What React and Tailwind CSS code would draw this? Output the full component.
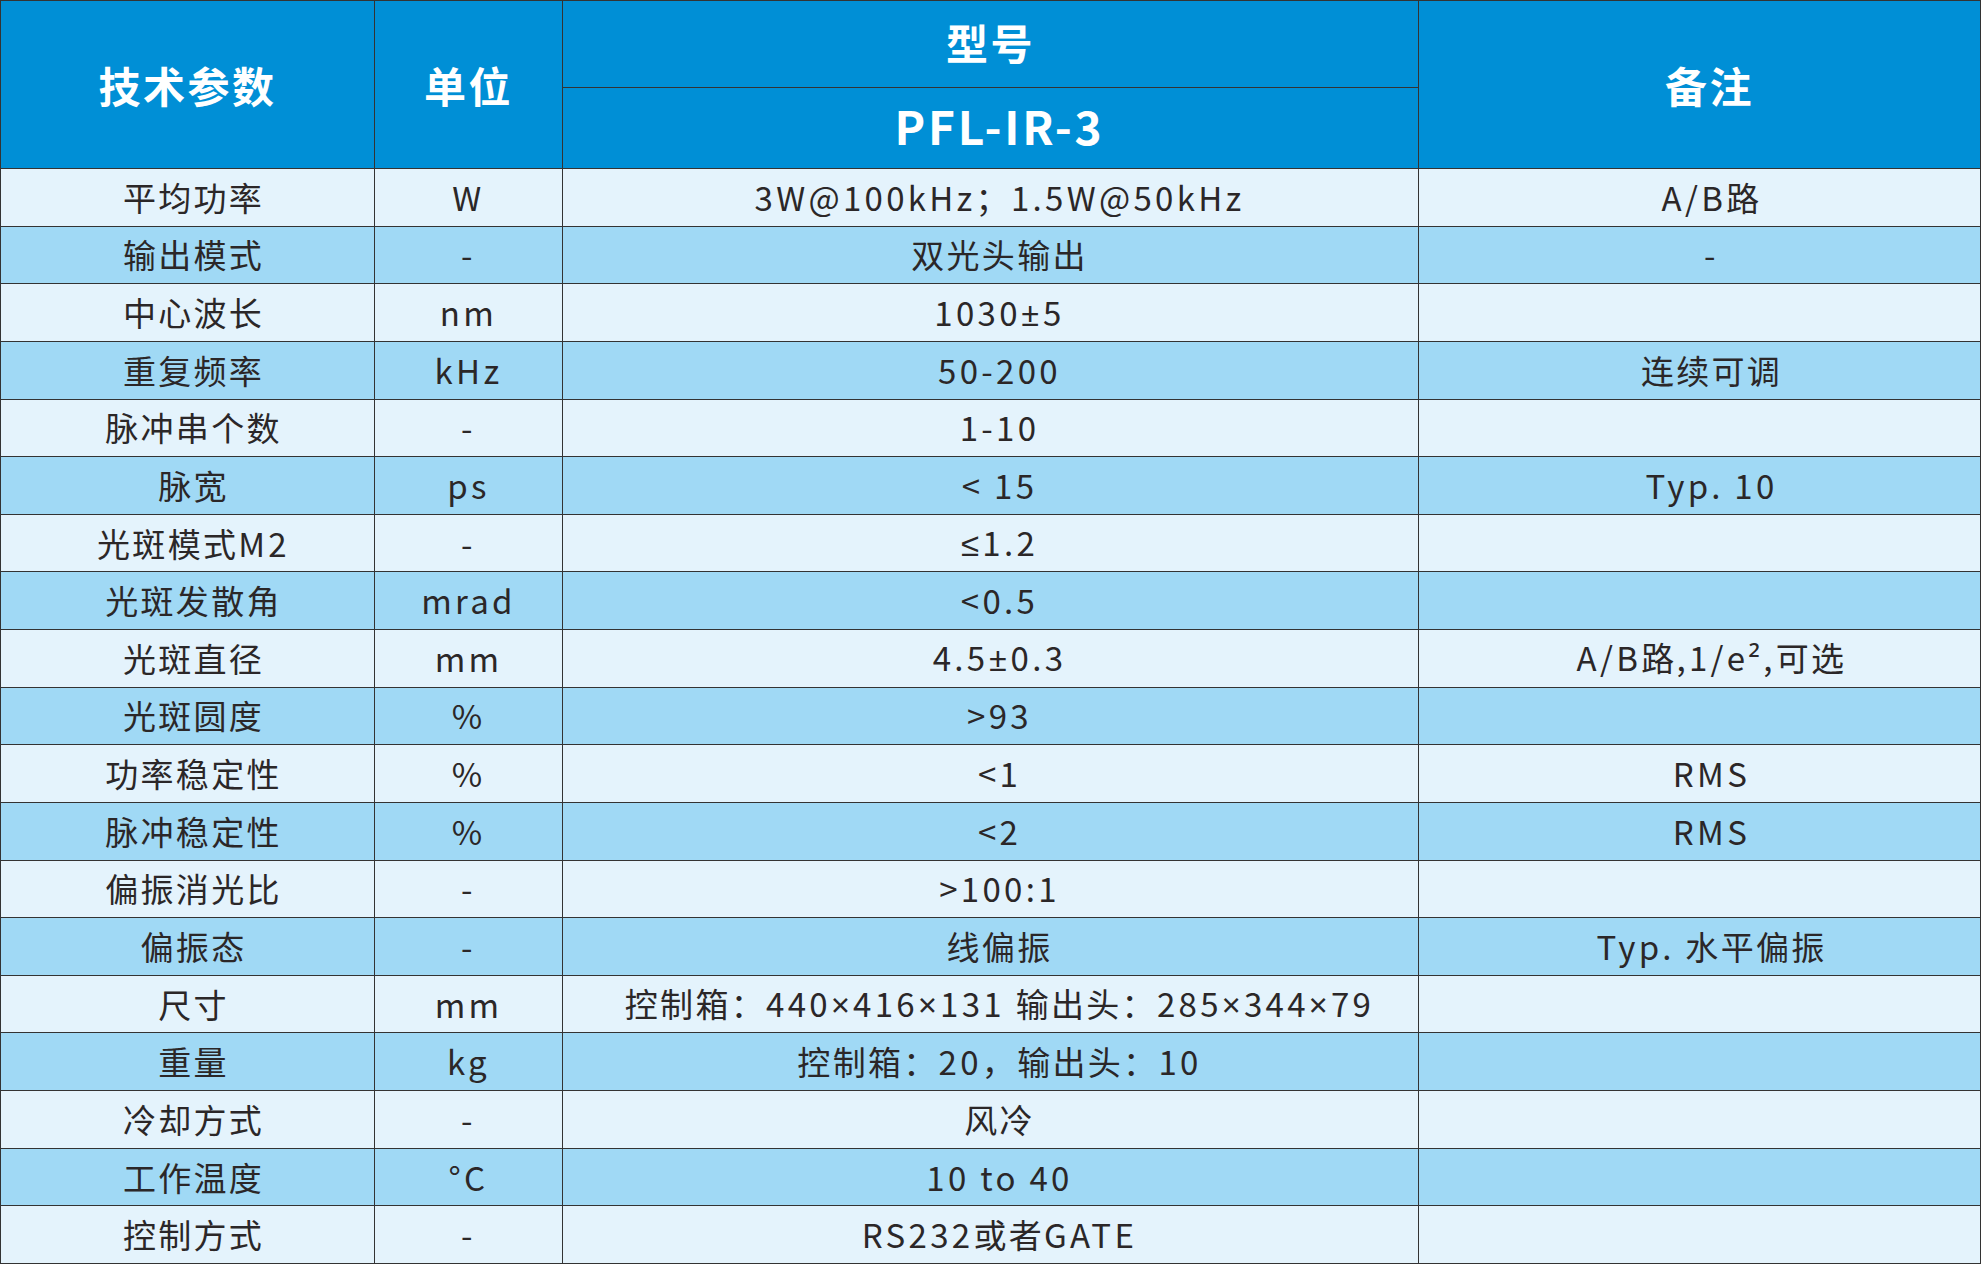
import React from 'react';

const rows = [
    ['平均功率', 'W', '3W@100kHz；1.5W@50kHz', 'A/B路'],
    ['输出模式', '-', '双光头输出', '-'],
    ['中心波长', 'nm', '1030±5', ''],
    ['重复频率', 'kHz', '50-200', '连续可调'],
    ['脉冲串个数', '-', '1-10', ''],
    ['脉宽', 'ps', '< 15', 'Typ. 10'],
    ['光斑模式M2', '-', '≤1.2', ''],
    ['光斑发散角', 'mrad', '<0.5', ''],
    ['光斑直径', 'mm', '4.5±0.3', 'A/B路,1/e²,可选'],
    ['光斑圆度', '%', '>93', ''],
    ['功率稳定性', '%', '<1', 'RMS'],
    ['脉冲稳定性', '%', '<2', 'RMS'],
    ['偏振消光比', '-', '>100:1', ''],
    ['偏振态', '-', '线偏振', 'Typ. 水平偏振'],
    ['尺寸', 'mm', '控制箱：440×416×131 输出头：285×344×79', ''],
    ['重量', 'kg', '控制箱：20，输出头：10', ''],
    ['冷却方式', '-', '风冷', ''],
    ['工作温度', '°C', '10 to 40', ''],
    ['控制方式', '-', 'RS232或者GATE', ''],
];

const colPad = ['pl-[12px]', '', 'pl-[18px]', 'pl-[24px]'];

const SYMBOL = /^[±×≤²]$/;
const CJK = /[\u3000-\u9fff\uff00-\uffef]/;

// latin runs are set looser than the CJK ones; ±, × and ≤ use the latin font
// because the CJK font draws them full width
const CellText = ({ text }) => (
    <span>
        {text.split(/([\u3000-\u9fff\uff00-\uffef]+)/).filter(Boolean).map((run, k) => {
            if (CJK.test(run)) {
                return <span key={k} className="tracking-[0.07em]">{run}</span>;
            }
            return (
                <span key={k} className="tracking-[0.1em]">
                    {run.split(/([±×≤²])/).map((part, m) =>
                        SYMBOL.test(part) ? (
                            <span key={m} style={{ fontFamily: '"Noto Sans", sans-serif' }}>{part}</span>
                        ) : (
                            part
                        )
                    )}
                </span>
            );
        })}
    </span>
);

const HeadCell = ({ children, className = '' }) => (
    <div className={`bg-[#008fd6] text-white font-bold flex items-center justify-center ${className}`}>
        {children}
    </div>
);

const App = () => {
    return (
        <div
            className="w-[1981px] h-[1264px] bg-[#333] p-px grid gap-px grid-cols-[373px_187px_855px_561px] grid-rows-[86px_80px_repeat(19,1fr)]"
            style={{ fontFamily: '"Noto Sans CJK SC", "Noto Sans", sans-serif' }}
        >
            <HeadCell className="col-start-1 row-start-1 row-span-2 text-[42px] tracking-[0.06em]">技术参数</HeadCell>
            <HeadCell className="col-start-2 row-start-1 row-span-2 text-[42px] tracking-[0.06em]">单位</HeadCell>
            <HeadCell className="col-start-3 row-start-1 text-[42px] tracking-[0.06em] pb-[6px]">型号</HeadCell>
            <HeadCell className="col-start-3 row-start-2 text-[46px] tracking-[0.06em] pl-[18px] pb-[6px]">PFL-IR-3</HeadCell>
            <HeadCell className="col-start-4 row-start-1 row-span-2 text-[42px] tracking-[0.06em] pl-[20px]">备注</HeadCell>

            {rows.map((row, i) => {
                const bg = i % 2 === 0 ? 'bg-[#e4f3fc]' : 'bg-[#a0d9f5]';
                return row.map((cell, j) => (
                    <div
                        key={`${i}-${j}`}
                        className={`${bg} ${colPad[j]} flex items-center justify-center text-[33px] text-[#2b2728] leading-none whitespace-pre`}
                    >
                        <CellText text={cell} />
                    </div>
                ));
            })}
        </div>
    );
};

export default App;
